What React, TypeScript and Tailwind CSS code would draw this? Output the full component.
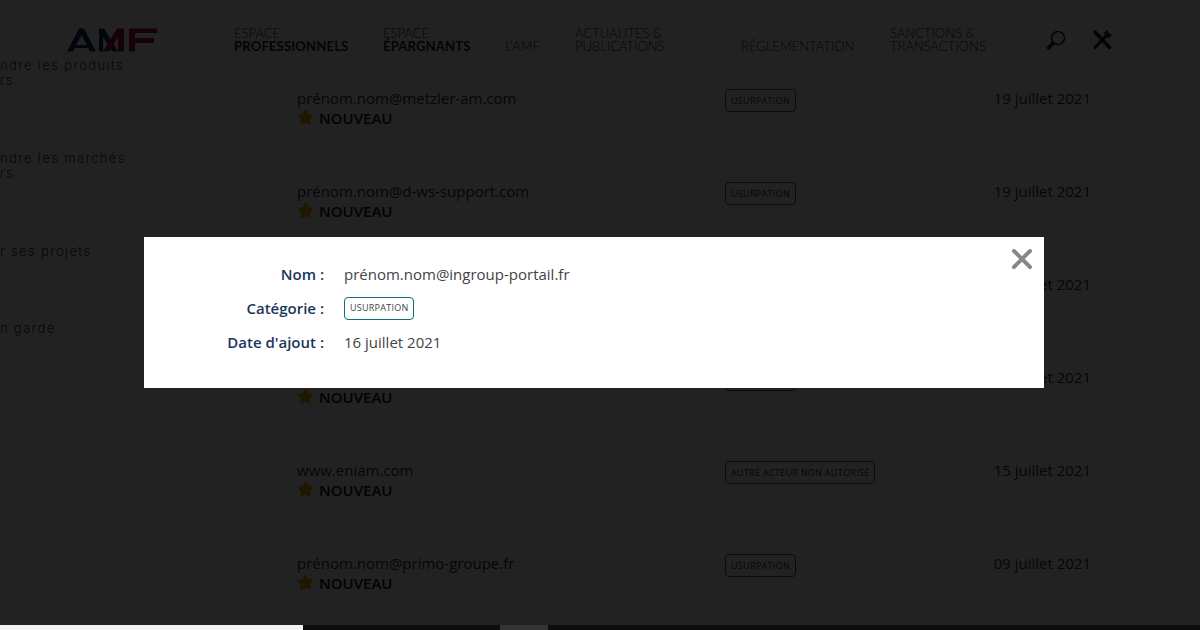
import { Star, X } from "lucide-react";

const navItems = [
  { top: "ESPACE", bottom: "PROFESSIONNELS", bold: true, width: "w-[149px]" },
  { top: "ESPACE", bottom: "ÉPARGNANTS", bold: true, width: "w-[122px]" },
  { top: "", bottom: "L'AMF", bold: false, width: "w-[70px]" },
  { top: "ACTUALITES &", bottom: "PUBLICATIONS", bold: false, width: "w-[166px]" },
  { top: "", bottom: "RÉGLEMENTATION", bold: false, width: "w-[149px]" },
  { top: "SANCTIONS &", bottom: "TRANSACTIONS", bold: false, width: "w-[156px]" },
];

// the emails of rows 3 and 4 sit behind the modal
const rows = [
  { email: "prénom.nom@metzler-am.com", tag: "USURPATION", date: "19 juillet 2021" },
  { email: "prénom.nom@d-ws-support.com", tag: "USURPATION", date: "19 juillet 2021" },
  { email: "", tag: "USURPATION", date: "16 juillet 2021" },
  { email: "", tag: "USURPATION", date: "16 juillet 2021" },
  { email: "www.eniam.com", tag: "AUTRE ACTEUR NON AUTORISÉ", date: "15 juillet 2021" },
  { email: "prénom.nom@primo-groupe.fr", tag: "USURPATION", date: "09 juillet 2021" },
];

const sideItems = [
  { lines: ["ndre les produits", "rs"], height: "h-[93px]" },
  { lines: ["ndre les marchés", "rs"], height: "h-[93px]" },
  { lines: ["r ses projets"], height: "h-[77px]" },
  { lines: ["n garde"], height: "h-[77px]" },
];

function Logo() {
  return (
    <svg width="92" height="24" viewBox="0 0 92 24" className="mt-[28px] ml-[66px] shrink-0">
      <path d="M1 23.5 L13 0.5 H18 L30 23.5 H24 L15.5 7 L7 23.5Z" fill="#10305f" />
      <path d="M8 17 H23 V20 H8Z" fill="#10305f" />
      <path d="M33 23.5 V0.5 H38 L52 23.5 H46 L37 9 V23.5Z" fill="#10305f" />
      <path d="M37 23.5 L51 0.5 H58 V23.5 H52 V9 L43 23.5Z" fill="#a01030" />
      <path d="M63 23.5 V0.5 H91 V5 H69 V10 H88 V15 H69 V23.5Z" fill="#a01030" />
    </svg>
  );
}

function Header() {
  return (
    <header className="relative z-10 flex h-[61px] bg-white">
      <Logo />
      <nav className="ml-[76px] flex h-[53px] font-['Lato',sans-serif] text-[13px] leading-[13px] text-[#10253f]">
        {navItems.map((item) => (
          <div key={item.bottom} className={`${item.width} flex flex-col justify-end pt-[27px] font-light`}>
            {item.top && <span>{item.top}</span>}
            <span className={item.bold ? "font-bold tracking-[.2px]" : ""}>{item.bottom}</span>
          </div>
        ))}
      </nav>
      <div className="flex h-[53px] items-end gap-[26px] pb-[3px] text-[#10253f]">
        <svg width="20" height="20" viewBox="0 0 20 20" fill="none" stroke="currentColor">
          <circle cx="12" cy="8" r="6.5" strokeWidth="1.5" />
          <path d="M7 13 L2.5 18" strokeWidth="3.4" strokeLinecap="round" />
        </svg>
        <svg width="20" height="20" viewBox="0 0 20 20" fill="none" stroke="currentColor">
          <path d="M3 2 L17.5 17.5" strokeWidth="3.4" strokeLinecap="round" />
          <path d="M16 4 L3 17.5" strokeWidth="3" strokeLinecap="round" />
          <path d="M12.5 4 L15.5 1 M16 7.5 L19 4.5" strokeWidth="2.2" />
        </svg>
      </div>
    </header>
  );
}

function Sidebar() {
  return (
    <aside className="-mt-[30px] w-[297px] shrink-0 font-['Inter',sans-serif] text-[13px] leading-[15px] font-light tracking-[1.35px] text-[#333]">
      {sideItems.map((item) => (
        <div key={item.lines[0]} className={item.height}>
          {item.lines.map((line) => (
            <p key={line}>{line}</p>
          ))}
        </div>
      ))}
    </aside>
  );
}

function Row({ email, tag, date }: { email: string; tag: string; date: string }) {
  return (
    <div className="flex h-[93px]">
      <div className="w-[428px] shrink-0">
        <p className="h-[20px] text-[15px] leading-[20px] text-[#333]">{email}</p>
        <p className="flex items-center gap-[5px] text-[15px] leading-[20px] font-semibold text-[#111]">
          <Star size={17} className="-mt-[2px] fill-[#e0b000] text-[#e0b000]" />
          NOUVEAU
        </p>
      </div>
      <div className="-mt-[2px] w-[200px] shrink-0">
        <span className="inline-flex h-[23px] items-center rounded-[4px] border border-[#0f6f7a] px-[5px] text-[9px] tracking-[.3px] text-[#333]">
          {tag}
        </span>
      </div>
      <p className="w-[166px] text-right text-[15px] leading-[20px] text-[#333]">{date}</p>
    </div>
  );
}

function Field({ label, children }: { label: string; children: React.ReactNode }) {
  return (
    <div className="flex h-[34px] items-center">
      <span className="w-[180px] text-right text-[15px] font-semibold text-[#1b365d]">{label}</span>
      <div className="ml-[20px] text-[15px] text-[#444]">{children}</div>
    </div>
  );
}

export default function App() {
  return (
    <div className="relative h-[630px] w-[1200px] overflow-hidden bg-white font-['Open_Sans',sans-serif]">
      <Header />
      <main className="flex pt-[27px]">
        <Sidebar />
        <div>
          {rows.map((row, i) => (
            <Row key={i} {...row} />
          ))}
        </div>
      </main>

      <div className="absolute inset-0 z-20 bg-black/[.865]" />

      <div className="absolute top-[237px] left-[144px] z-30 h-[151px] w-[900px] bg-white pt-[20px]">
        <Field label="Nom :">prénom.nom@ingroup-portail.fr</Field>
        <Field label="Catégorie :">
          <span className="flex h-[23px] items-center rounded-[4px] border border-[#0f6f7a] px-[5px] text-[9px] tracking-[.25px]">
            USURPATION
          </span>
        </Field>
        <Field label="Date d'ajout :">16 juillet 2021</Field>
        <X size={32} strokeWidth={3} className="absolute top-[6px] right-[6px] text-[#888]" />
      </div>

      <div className="absolute inset-x-0 bottom-0 z-30 flex h-[5px] bg-[#0c0c0c]">
        <div className="w-[303px] bg-[#f2f2f2]" />
        <div className="ml-[197px] w-[48px] bg-[#333]" />
      </div>
    </div>
  );
}
